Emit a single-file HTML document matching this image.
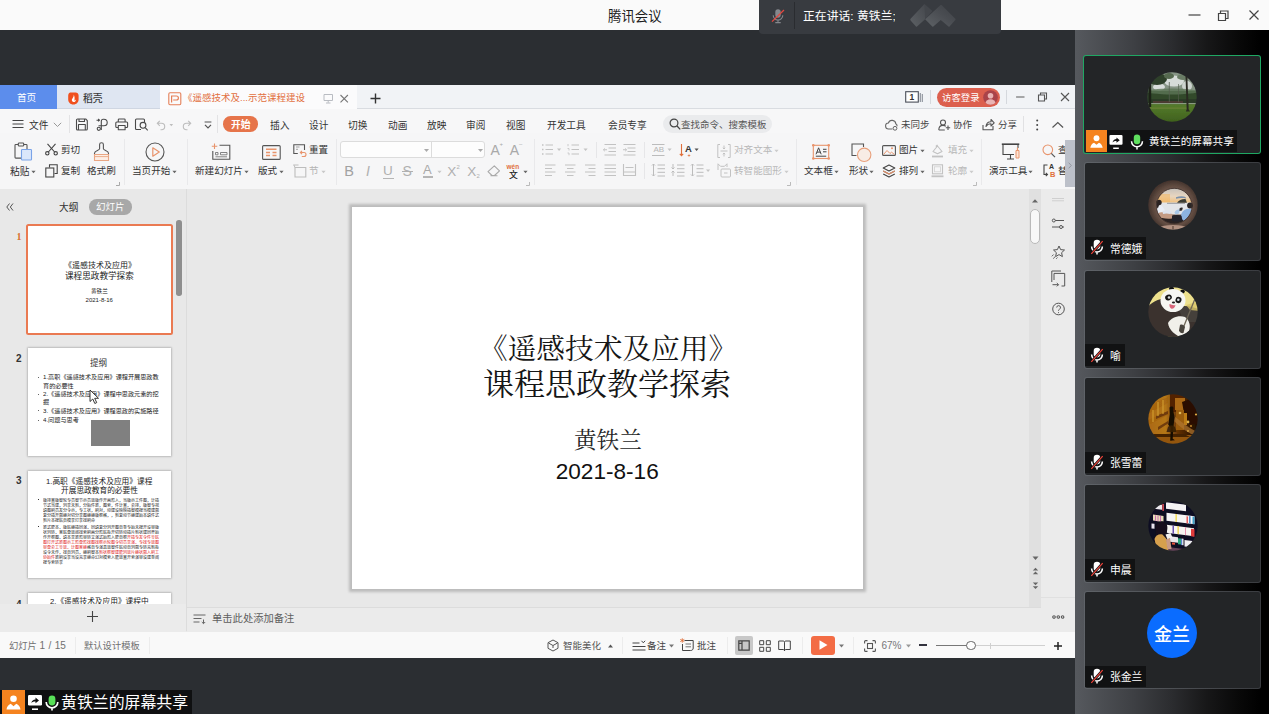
<!DOCTYPE html>
<html lang="zh">
<head>
<meta charset="utf-8">
<title>腾讯会议</title>
<style>
html,body{margin:0;padding:0;}
body{width:1269px;height:714px;overflow:hidden;position:relative;background:#2b2e32;font-family:"Liberation Sans",sans-serif;}
.a{position:absolute;}
.cj{position:absolute;display:block;overflow:hidden;}
.cj svg{position:absolute;left:0;top:0;display:block;overflow:visible;}
.cj svg text{font-family:"Liberation Sans","Noto Sans CJK SC",sans-serif;}
.cj svg text.sf{font-family:"Liberation Serif","Noto Serif CJK SC",serif;}
svg.ic{position:absolute;overflow:visible;}
.lat{position:absolute;white-space:nowrap;line-height:1;}
.sep{position:absolute;width:1px;background:#dcdcdc;}
.tile{position:absolute;left:1084px;width:176.500px;height:98.500px;background:linear-gradient(to right,#5f6368,#3a3c40);border-radius:3px;}
.tile::after{content:"";position:absolute;left:1px;top:1px;right:1px;bottom:1px;background:#232527;border-radius:2px;}
.lab{position:absolute;background:#111213;}
</style>
</head>
<body>

<!-- ===== Tencent Meeting title bar ===== -->
<div class="a" id="titlebar" style="left:0;top:0;width:1269px;height:30px;background:#fafafa;"></div>
<div class="a" id="speaking" style="left:759px;top:0;width:242px;height:33.5px;background:#383b40;border-radius:0 0 4px 4px;"></div>
<div class="a" style="left:794px;top:2px;width:1px;height:27px;background:#2a2c30;"></div>

<!-- ===== right participant panel ===== -->
<div class="a" id="rightpanel" style="left:1075px;top:30px;width:194px;height:684px;background:linear-gradient(to right,#56595e 0,#3e4044 30%,#2b2c2f 50%,#171718 68%,#080808 85%,#000 96%);"></div>

<!-- ===== shared WPS window ===== -->
<div class="a" id="wps" style="left:0;top:85px;width:1075px;height:573px;background:#e8e8e8;overflow:hidden;">
  <div class="a" id="tabrow" style="left:0;top:0;width:1075px;height:23px;background:#f1f3f6;border-bottom:1px solid #d9dce1;"></div>
  <div class="a" id="menurow" style="left:0;top:24px;width:1075px;height:24px;background:#f7f7f8;"></div>
  <div class="a" id="ribbon" style="left:0;top:48px;width:1075px;height:56px;background:#f6f6f7;"></div>
  <div class="a" id="statusbar" style="left:0;top:546.5px;width:1075px;height:27px;background:#f9f9f9;"></div>
</div>

<!-- title bar content -->
<span class="cj" style="left:607.7px;top:8.9px;width:54.6px;height:16.08px"><svg width="54.6" height="16.08"><text x="0" y="11.79" font-size="13.4" fill="#1d1d1d">腾讯会议</text></svg></span>
<svg class="ic" style="left:769px;top:7px" width="18" height="18" viewBox="0 0 18 18">
  <rect x="6.3" y="2.2" width="5.4" height="8.6" rx="2.7" fill="#85888d"/>
  <path d="M4.2 8.3a4.8 4.8 0 0 0 9.6 0M9 13.1v2.2M6.3 15.6h5.4" fill="none" stroke="#85888d" stroke-width="1.1"/>
  <path d="M3 14.6L15 3" stroke="#e5483f" stroke-width="1.3"/>
</svg>
<span class="cj" style="left:802.5px;top:10.1px;width:92.8px;height:14.16px"><svg width="92.8" height="14.16"><text x="0" y="10.38" font-size="11.8" fill="#ffffff" textLength="92.8" lengthAdjust="spacing">正在讲话: 黄铁兰;</text></svg></span>
<svg class="ic" style="left:905px;top:0px" width="56" height="32" viewBox="905 0 56 32">
  <defs>
    <linearGradient id="dg1" x1="0" y1="1" x2="1" y2="0"><stop offset="0" stop-color="#5d6165"/><stop offset="1" stop-color="#45484d"/></linearGradient>
    <linearGradient id="dg2" x1="0" y1="1" x2="1" y2="0"><stop offset="0" stop-color="#5f6367"/><stop offset=".55" stop-color="#4a4d52"/><stop offset="1" stop-color="#3d4045"/></linearGradient>
  </defs>
  <path d="M910.600 18.800L924 4.500q.5-.5 1 0L925.100 19.300 917 26.600q-.5.400-1 0L910.600 20.400q-.7-.8 0-1.600z" fill="url(#dg1)"/>
  <path d="M924.500 4.100L932.500 11 925.100 19.300z" fill="#43464b"/>
  <path d="M925.100 19.300L940.600 5.100q.5-.4 1 0L955.300 18.800q.6.600 0 1.200L949.500 26.600q-.5.400-1 0L940.800 20.100 933.300 26.600q-.5.400-1 0z" fill="url(#dg2)"/>
</svg>
<!-- window controls -->
<svg class="ic" style="left:1186px;top:6px" width="80" height="18" viewBox="0 0 80 18">
  <path d="M2.5 9h12" stroke="#444" stroke-width="1.2" fill="none"/>
  <path d="M32.5 7.5h7v7h-7zM34.5 7.5v-2.5h7.5v7.5h-2.5" stroke="#444" stroke-width="1.2" fill="none"/>
  <path d="M63.5 4.5l9 9M72.5 4.5l-9 9" stroke="#444" stroke-width="1.2" fill="none"/>
</svg>

<!-- WPS tab row -->
<div class="a" style="left:0;top:85px;width:56.5px;height:23.5px;background:#5c8dec;"></div>
<span class="cj" style="left:17.4px;top:92.8px;width:20.2px;height:11.52px"><svg width="20.2" height="11.52"><text x="0" y="8.45" font-size="9.6" fill="#ffffff">首页</text></svg></span>
<div class="a" style="left:56.5px;top:85px;width:103.5px;height:23px;background:#dfe6f2;border-bottom:1px solid #cfd6e2;box-sizing:border-box;height:23.5px"></div>
<svg class="ic" style="left:67px;top:91.5px" width="12" height="13" viewBox="0 0 12 13">
  <path d="M3.2.4h5.4c1.6 0 3 1.3 3 3v4.2c0 2.800-2.200 5-5 5h-.4c-2.800 0-5-2.200-5-5V3.400c0-1.700 1.300-3 2-3z" fill="#f0501e"/>
  <path d="M6.600 2.600c.4 1.500-.2 2.600-1 3.600-.7.900-1 1.800-.5 2.800.4.800 1.300 1.200 2.200.9 1.100-.3 1.700-1.400 1.500-2.500-.5.700-.9 1-1.500 1.100.6-1.400.5-3.800-.7-5.900z" fill="#fff"/>
</svg>
<span class="cj" style="left:82.6px;top:92.7px;width:20.6px;height:11.76px"><svg width="20.6" height="11.76"><text x="0" y="8.62" font-size="9.8" font-weight="500" fill="#3a3a3a">稻壳</text></svg></span>
<div class="a" style="left:160px;top:85px;width:196.5px;height:24px;background:#fbfbfc;"></div>
<svg class="ic" style="left:167.500px;top:91.5px" width="14" height="14" viewBox="0 0 14 14">
  <rect x=".8" y=".8" width="12" height="12" rx="1.2" fill="none" stroke="#e58058" stroke-width="1.100"/>
  <path d="M3.600 10.400V4h4.800a2 2 0 0 1 0 4H5.200" fill="none" stroke="#e58058" stroke-width="1.200"/>
</svg>
<span class="cj" style="left:183.2px;top:92.85px;width:122.92px;height:11.4px"><svg width="122.92" height="11.4"><text x="0" y="8.36" font-size="9.5" fill="#e2703f">《遥感技术及...示范课程建设</text></svg></span>
<svg class="ic" style="left:322.500px;top:92.5px" width="30" height="12" viewBox="0 0 30 12">
  <path d="M1 1.500h8.500v6H1zM5.200 7.500v2.200M3 10h4.500" fill="none" stroke="#b9bcc2" stroke-width="1"/>
  <path d="M17.500 2l7.400 7.400M24.900 2l-7.400 7.400" fill="none" stroke="#777" stroke-width="1.100"/>
</svg>
<svg class="ic" style="left:369.500px;top:93px" width="11" height="11" viewBox="0 0 11 11"><path d="M5.500 0.500v10M.5 5.500h10" stroke="#333" stroke-width="1.400" fill="none"/></svg>
<!-- right side of tab row -->
<svg class="ic" style="left:905px;top:91px" width="19" height="12" viewBox="0 0 19 12">
  <rect x=".7" y=".7" width="12.600" height="10.400" fill="#fff" stroke="#4a4f5a" stroke-width="1.100"/>
  <path d="M15.300 2v9M17.300 3v8" stroke="#8a8f99" stroke-width="1.100"/>
</svg>
<div class="lat" style="left:909.5px;top:92.8px;font-size:8.5px;font-weight:bold;color:#333;">1</div>
<div class="sep" style="left:929.5px;top:90px;height:14px;background:#d5d8dd"></div>
<div class="a" style="left:936.5px;top:87.5px;width:63px;height:19px;border-radius:9.5px;background:#dc5f4e;"></div>
<span class="cj" style="left:942px;top:92.6px;width:38.6px;height:11.28px"><svg width="38.6" height="11.28"><text x="0" y="8.27" font-size="9.4" fill="#ffffff">访客登录</text></svg></span>
<svg class="ic" style="left:982.800px;top:89.5px" width="15" height="15" viewBox="0 0 15 15">
  <defs><clipPath id="cpu"><circle cx="7.500" cy="7.500" r="7.300"/></clipPath></defs>
  <circle cx="7.500" cy="7.500" r="7.300" fill="#a9434a"/>
  <g clip-path="url(#cpu)" fill="#e9b4b4"><circle cx="7.500" cy="5.800" r="2.800"/><ellipse cx="7.500" cy="13.600" rx="5.200" ry="4.400"/></g>
</svg>
<div class="sep" style="left:1006px;top:90px;height:14px;background:#d5d8dd"></div>
<svg class="ic" style="left:1014px;top:91px" width="58" height="12" viewBox="0 0 58 12">
  <path d="M2 6h8.500" stroke="#666" stroke-width="1.100" fill="none"/>
  <path d="M24.500 4h6v6h-6zM26.500 4V2h6v6h-2" stroke="#555" stroke-width="1.100" fill="none"/>
  <path d="M47 2l8 8M55 2l-8 8" stroke="#555" stroke-width="1.100" fill="none"/>
</svg>

<!-- WPS menu row -->
<svg class="ic" style="left:12px;top:119px" width="12" height="10" viewBox="0 0 12 10"><path d="M.5 1.500h11M.5 5h11M.5 8.500h11" stroke="#444" stroke-width="1.100" fill="none"/></svg>
<span class="cj" style="left:28.5px;top:119.55px;width:20.4px;height:11.64px"><svg width="20.4" height="11.64"><text x="0" y="8.54" font-size="9.7" fill="#333333">文件</text></svg></span>
<svg class="ic" style="left:52.500px;top:122px" width="9" height="6" viewBox="0 0 9 6"><path d="M.8.8l3.700 3.700L8.200.8" stroke="#999" stroke-width="1" fill="none"/></svg>
<div class="sep" style="left:68.500px;top:115px;height:18px;background:#e3e3e5"></div>
<!-- quick access icons -->
<svg class="ic" style="left:75px;top:117.500px" width="120" height="14" viewBox="0 0 120 14">
  <g fill="none" stroke="#4a4a4a" stroke-width="1.100" stroke-linejoin="round">
    <path d="M2.500 1h8.200l1.600 1.600v8.400a1 1 0 0 1-1 1H2.500a1 1 0 0 1-1-1V2a1 1 0 0 1 1-1zM3.500 11.800V6.500h6.800v5.300M4 1.200v2.300h5.500V1.200"/>
    <path d="M26.300 12V3.200a2 2 0 0 1 2-2h.6a3.300 3.300 0 0 1 0 6.600h-5.400M21.500 2.200h2.800M23.200 1l1.300 1.200-1.300 1.200"/><circle cx="23.800" cy="10.800" r="1.600"/>
    <path d="M43.300 4V1.800a.8.800 0 0 1 .8-.8h5.200a.8.800 0 0 1 .8.800V4M43.300 9.500h-1.500a1 1 0 0 1-1-1V5a1 1 0 0 1 1-1h9.800a1 1 0 0 1 1 1v3.500a1 1 0 0 1-1 1h-1.500M43.300 7.500h6.800v4.300h-6.800z"/>
    <path d="M66 11.500h-4.500a1 1 0 0 1-1-1V2a1 1 0 0 1 1-1h7a1 1 0 0 1 1 1v2"/><circle cx="68" cy="7.300" r="2.900"/><path d="M70.200 9.600l2.500 2.700"/>
  </g>
  <g fill="none" stroke="#bdbdbd" stroke-width="1.100">
    <path d="M82.500 5.300h4a3.200 3.200 0 0 1 0 6.400h-1M84.800 2.800l-2.500 2.500 2.500 2.500"/>
    <path d="M115.500 5.300h-4a3.200 3.200 0 0 0 0 6.400h1M113.200 2.800l2.500 2.500-2.500 2.500"/>
  </g>
  <path d="M94.500 6l1.800 2.200L98.100 6z" fill="#bdbdbd"/>
</svg>
<svg class="ic" style="left:203.500px;top:120.500px" width="8" height="9" viewBox="0 0 8 9"><path d="M.6 1h6.800M1 3.800l3 3 3-3" stroke="#555" stroke-width="1.200" fill="none"/></svg>
<div class="sep" style="left:217px;top:115px;height:18px;background:#e3e3e5"></div>
<div class="a" style="left:223px;top:116.300px;width:34.500px;height:15.400px;border-radius:7.700px;background:#e6744a;"></div>
<span class="cj" style="left:230.5px;top:119.3px;width:20.6px;height:11.76px"><svg width="20.6" height="11.76"><text x="0" y="8.62" font-size="9.8" font-weight="bold" fill="#ffffff">开始</text></svg></span>
<span class="cj" style="left:269.8px;top:119.55px;width:20.4px;height:11.64px"><svg width="20.4" height="11.64"><text x="0" y="8.54" font-size="9.7" fill="#333333">插入</text></svg></span>
<span class="cj" style="left:309.1px;top:119.55px;width:20.4px;height:11.64px"><svg width="20.4" height="11.64"><text x="0" y="8.54" font-size="9.7" fill="#333333">设计</text></svg></span>
<span class="cj" style="left:348.3px;top:119.55px;width:20.4px;height:11.64px"><svg width="20.4" height="11.64"><text x="0" y="8.54" font-size="9.7" fill="#333333">切换</text></svg></span>
<span class="cj" style="left:387.7px;top:119.55px;width:20.4px;height:11.64px"><svg width="20.4" height="11.64"><text x="0" y="8.54" font-size="9.7" fill="#333333">动画</text></svg></span>
<span class="cj" style="left:427.1px;top:119.55px;width:20.4px;height:11.64px"><svg width="20.4" height="11.64"><text x="0" y="8.54" font-size="9.7" fill="#333333">放映</text></svg></span>
<span class="cj" style="left:466.4px;top:119.55px;width:20.4px;height:11.64px"><svg width="20.4" height="11.64"><text x="0" y="8.54" font-size="9.7" fill="#333333">审阅</text></svg></span>
<span class="cj" style="left:506px;top:119.55px;width:20.4px;height:11.64px"><svg width="20.4" height="11.64"><text x="0" y="8.54" font-size="9.7" fill="#333333">视图</text></svg></span>
<span class="cj" style="left:547.3px;top:119.55px;width:39.8px;height:11.64px"><svg width="39.8" height="11.64"><text x="0" y="8.54" font-size="9.7" fill="#333333">开发工具</text></svg></span>
<span class="cj" style="left:608.2px;top:119.55px;width:39.8px;height:11.64px"><svg width="39.8" height="11.64"><text x="0" y="8.54" font-size="9.7" fill="#333333">会员专享</text></svg></span>
<div class="a" style="left:662.500px;top:114.600px;width:109px;height:18.500px;border-radius:9.250px;background:#eaebed;"></div>
<svg class="ic" style="left:668.500px;top:118px" width="12" height="12" viewBox="0 0 12 12"><circle cx="5" cy="5" r="3.900" fill="none" stroke="#444" stroke-width="1.200"/><path d="M7.800 7.800l3.400 3.600" stroke="#444" stroke-width="1.300"/></svg>
<span class="cj" style="left:681.3px;top:119.65px;width:86.5px;height:11.4px"><svg width="86.5" height="11.4"><text x="0" y="8.36" font-size="9.5" fill="#555555">查找命令、搜索模板</text></svg></span>
<!-- right of menu row -->
<svg class="ic" style="left:885px;top:118.500px" width="13" height="12" viewBox="0 0 13 12"><path d="M7.500 10H3.800a3 3 0 0 1-.4-6 3.800 3.800 0 0 1 7.400.8 2.600 2.600 0 0 1 1.300 2.400" fill="none" stroke="#666" stroke-width="1.100"/><circle cx="10" cy="9.300" r="1.900" fill="none" stroke="#666" stroke-width="1"/></svg>
<span class="cj" style="left:900.5px;top:119.65px;width:29.5px;height:11.4px"><svg width="29.5" height="11.4"><text x="0" y="8.36" font-size="9.5" fill="#444444">未同步</text></svg></span>
<svg class="ic" style="left:937.500px;top:118.500px" width="13" height="12" viewBox="0 0 13 12"><circle cx="5" cy="3.500" r="2.500" fill="none" stroke="#555" stroke-width="1.100"/><path d="M.8 11c0-3 1.800-4.600 4.200-4.600 1.200 0 2 .3 2.800.9M.8 11h6M10 6.500v4.400M7.800 8.700h4.400" fill="none" stroke="#555" stroke-width="1.100"/></svg>
<span class="cj" style="left:953px;top:119.65px;width:20px;height:11.4px"><svg width="20" height="11.4"><text x="0" y="8.36" font-size="9.5" fill="#444444">协作</text></svg></span>
<svg class="ic" style="left:982px;top:118px" width="13" height="13" viewBox="0 0 13 13"><path d="M1 7v4.800h10V8M4 8.500c.3-3 2.200-4.800 5-4.800V1.500l3.200 3.300L9 8V5.800C7 5.800 5.200 6.500 4 8.500z" fill="none" stroke="#555" stroke-width="1.100" stroke-linejoin="round"/></svg>
<span class="cj" style="left:997.5px;top:119.65px;width:20px;height:11.4px"><svg width="20" height="11.4"><text x="0" y="8.36" font-size="9.5" fill="#444444">分享</text></svg></span>
<div class="sep" style="left:1023px;top:116px;height:16px;background:#e1e1e3"></div>
<svg class="ic" style="left:1035px;top:118.500px" width="30" height="12" viewBox="0 0 30 12"><g fill="#444"><circle cx="2.200" cy="1.500" r="1"/><circle cx="2.200" cy="6" r="1"/><circle cx="2.200" cy="10.500" r="1"/></g><path d="M17.500 8.500l5.300-5 5.300 5" fill="none" stroke="#555" stroke-width="1.200"/></svg>

<!-- WPS ribbon -->
<!-- paste -->
<svg class="ic" style="left:14px;top:142px" width="19" height="19" viewBox="0 0 19 19">
  <path d="M4.500 2.500H1.800a.8.800 0 0 0-.8.800v12a.8.800 0 0 0 .8.800H7M9.500 2.500h2.700a.8.800 0 0 1 .8.800V7" fill="none" stroke="#555" stroke-width="1.100"/>
  <rect x="4.300" y="1" width="5.400" height="3" rx=".8" fill="#f6f6f7" stroke="#555" stroke-width="1.100"/>
  <rect x="7.500" y="7.500" width="10" height="10.500" rx=".8" fill="#dbe7fb" stroke="#7aa3e8" stroke-width="1.100"/>
</svg>
<span class="cj" style="left:10.2px;top:166.35px;width:20.4px;height:11.64px"><svg width="20.4" height="11.64"><text x="0" y="8.54" font-size="9.7" fill="#333333">粘贴</text></svg></span>
<svg class="ic" style="left:31px;top:169.500px" width="5" height="4" viewBox="0 0 5 4"><path d="M.4 .8h4.200L2.500 3.300z" fill="#666"/></svg>
<!-- cut / copy -->
<svg class="ic" style="left:44.500px;top:143px" width="13" height="13" viewBox="0 0 13 13"><g fill="none" stroke="#444" stroke-width="1.100"><circle cx="2.300" cy="10.300" r="1.700"/><circle cx="10.700" cy="10.300" r="1.700"/><path d="M3.400 9L10.500.8M9.600 9L2.500.8"/></g></svg>
<span class="cj" style="left:60.5px;top:145.4px;width:20.2px;height:11.52px"><svg width="20.2" height="11.52"><text x="0" y="8.45" font-size="9.6" fill="#333333">剪切</text></svg></span>
<svg class="ic" style="left:44.500px;top:164px" width="13" height="14" viewBox="0 0 13 14"><g fill="none" stroke="#444" stroke-width="1.100"><path d="M4.500 3.500V.8h7.700v8.700H9.500"/><rect x=".8" y="4" width="8" height="9"/></g></svg>
<span class="cj" style="left:60.5px;top:166.4px;width:20.2px;height:11.52px"><svg width="20.2" height="11.52"><text x="0" y="8.45" font-size="9.6" fill="#333333">复制</text></svg></span>
<!-- format painter -->
<svg class="ic" style="left:93px;top:141.500px" width="17" height="20" viewBox="0 0 17 20">
  <path d="M6.600 2.600a1.900 1.900 0 0 1 3.800 0V6.800c0 1.700 5.100 1.800 5.100 4.400v1.300h-14V11.200c0-2.600 5.100-2.700 5.100-4.400z" fill="none" stroke="#555" stroke-width="1.100" stroke-linejoin="round"/>
  <path d="M1.500 12.500h14v6h-14z" fill="#fdeee5" stroke="#e9a683" stroke-width="1.100"/>
  <path d="M1.500 14.600h14" stroke="#e9a683" stroke-width=".9"/>
</svg>
<span class="cj" style="left:87.4px;top:166.4px;width:29.8px;height:11.52px"><svg width="29.8" height="11.52"><text x="0" y="8.45" font-size="9.6" fill="#333333">格式刷</text></svg></span>
<svg class="ic" style="left:116px;top:182px" width="4" height="4" viewBox="0 0 4 4"><path d="M3.500 0v3.500H0" fill="none" stroke="#aaa" stroke-width="1"/></svg>
<div class="sep" style="left:124px;top:139px;height:46px;background:#e9e9eb"></div>
<!-- play from current -->
<svg class="ic" style="left:144.500px;top:142px" width="20" height="20" viewBox="0 0 20 20"><circle cx="10" cy="10" r="9" fill="none" stroke="#555" stroke-width="1.100"/><path d="M7.800 5.800v8.400L14.300 10z" fill="none" stroke="#e8946c" stroke-width="1.200" stroke-linejoin="round"/></svg>
<span class="cj" style="left:132.4px;top:166.4px;width:39.4px;height:11.52px"><svg width="39.4" height="11.52"><text x="0" y="8.45" font-size="9.6" fill="#333333">当页开始</text></svg></span>
<svg class="ic" style="left:172.300px;top:169.500px" width="5" height="4" viewBox="0 0 5 4"><path d="M.4 .8h4.200L2.500 3.300z" fill="#666"/></svg>
<div class="sep" style="left:186.500px;top:139px;height:46px;background:#e9e9eb"></div>
<!-- new slide -->
<svg class="ic" style="left:211px;top:142.500px" width="20" height="18" viewBox="0 0 20 18">
  <path d="M3.500.5v5.500M.8 3.200h5.500" stroke="#e8946c" stroke-width="1.100" fill="none"/>
  <path d="M8.500 2.200h10.300v14H1.800V8" fill="none" stroke="#555" stroke-width="1.100"/>
  <path d="M4.500 9.500h2.500v2.300H4.500zM9.500 9.500h6.500v2.300H9.500zM4.500 13.800h11.500" fill="none" stroke="#777" stroke-width=".9"/>
</svg>
<span class="cj" style="left:194.7px;top:166.4px;width:49px;height:11.52px"><svg width="49" height="11.52"><text x="0" y="8.45" font-size="9.6" fill="#333333">新建幻灯片</text></svg></span>
<svg class="ic" style="left:244px;top:169.500px" width="5" height="4" viewBox="0 0 5 4"><path d="M.4 .8h4.200L2.500 3.300z" fill="#666"/></svg>
<!-- layout -->
<svg class="ic" style="left:261.500px;top:144.500px" width="19" height="15" viewBox="0 0 19 15">
  <rect x=".6" y=".6" width="17.600" height="13.800" rx="1" fill="none" stroke="#555" stroke-width="1.100"/>
  <path d="M4 4.300h10.500M4 7.600h4M10.500 7.600h4M4 10.500h4M10.500 10.500h4" stroke="#e8946c" stroke-width="1.500" fill="none"/>
</svg>
<span class="cj" style="left:258.2px;top:166.4px;width:20.2px;height:11.52px"><svg width="20.2" height="11.52"><text x="0" y="8.45" font-size="9.6" fill="#333333">版式</text></svg></span>
<svg class="ic" style="left:278.800px;top:169.500px" width="5" height="4" viewBox="0 0 5 4"><path d="M.4 .8h4.200L2.500 3.300z" fill="#666"/></svg>
<!-- reset / section -->
<svg class="ic" style="left:292.500px;top:143.500px" width="14" height="13" viewBox="0 0 14 13">
  <path d="M11.500 6V.8H.8v8.700h4" fill="none" stroke="#555" stroke-width="1.100"/>
  <path d="M3 3h3.500M3 5.300h2" stroke="#999" stroke-width=".9"/>
  <path d="M7.500 8.500h3.500a2 2 0 0 1 0 4H8.800M9 6.800L7.300 8.500 9 10.200" fill="none" stroke="#e8946c" stroke-width="1.100"/>
</svg>
<span class="cj" style="left:308.5px;top:145.4px;width:20.2px;height:11.52px"><svg width="20.2" height="11.52"><text x="0" y="8.45" font-size="9.6" fill="#333333">重置</text></svg></span>
<svg class="ic" style="left:292.500px;top:163.500px" width="14" height="14" viewBox="0 0 14 14">
  <path d="M.5 1h5M2 3.500h10.800v9.500H2z" fill="none" stroke="#bdbdbd" stroke-width="1.100"/><path d="M2 3.500L.8.800" stroke="#bdbdbd" stroke-width="1"/>
</svg>
<span class="cj" style="left:309px;top:166.4px;width:10.6px;height:11.52px"><svg width="10.6" height="11.52"><text x="0" y="8.45" font-size="9.6" fill="#b3b3b3">节</text></svg></span>
<svg class="ic" style="left:320.500px;top:169.500px" width="5" height="4" viewBox="0 0 5 4"><path d="M.4 .8h4.200L2.500 3.300z" fill="#c8c8c8"/></svg>
<div class="sep" style="left:335.500px;top:139px;height:46px;background:#e9e9eb"></div>
<!-- font boxes -->
<div class="a" style="left:339.500px;top:140.500px;width:145px;height:17.500px;background:#fdfdfd;border:1px solid #dcdcdc;border-radius:3px;box-sizing:border-box"></div>
<div class="a" style="left:431px;top:141px;width:1px;height:16.500px;background:#dcdcdc"></div>
<svg class="ic" style="left:424px;top:148.500px" width="5" height="3" viewBox="0 0 5 3"><path d="M0 0h5L2.500 3z" fill="#aaa"/></svg>
<svg class="ic" style="left:477.500px;top:148.500px" width="5" height="3" viewBox="0 0 5 3"><path d="M0 0h5L2.500 3z" fill="#aaa"/></svg>
<!-- A+ A- -->
<div class="lat" style="left:490.500px;top:142.500px;font-size:14px;color:#a9a9a9;">A</div>
<div class="lat" style="left:499.500px;top:141px;font-size:6px;color:#a9a9a9;">+</div>
<div class="lat" style="left:509.800px;top:142.500px;font-size:14px;color:#a9a9a9;">A</div>
<div class="lat" style="left:519px;top:140.500px;font-size:6px;color:#a9a9a9;">&#8211;</div>
<!-- B I U S A X2 X2 eraser wen -->
<div class="lat" style="left:344.200px;top:164px;font-size:14.500px;color:#a2a2a2;">B</div>
<div class="lat" style="left:366px;top:164px;font-size:14px;color:#b0b0b0;font-style:italic;">I</div>
<div class="lat" style="left:383px;top:164px;font-size:13.500px;color:#b0b0b0;">U</div>
<div class="a" style="left:382.500px;top:177.500px;width:11px;height:1px;background:#b5b5b5"></div>
<div class="lat" style="left:402.500px;top:164px;font-size:14px;color:#b0b0b0;">S</div>
<div class="a" style="left:401.500px;top:170.500px;width:11.500px;height:1px;background:#b0b0b0"></div>
<div class="lat" style="left:423px;top:163px;font-size:13px;color:#a9a9a9;">A</div>
<div class="a" style="left:422.500px;top:175.500px;width:10px;height:2px;background:#b5b5b5"></div>
<svg class="ic" style="left:437px;top:169.500px" width="5" height="4" viewBox="0 0 5 4"><path d="M.4 .8h4.200L2.500 3.300z" fill="#c8c8c8"/></svg>
<div class="lat" style="left:447.300px;top:164.500px;font-size:13.500px;color:#b0b0b0;">X</div>
<div class="lat" style="left:456.500px;top:164px;font-size:6px;color:#b0b0b0;">2</div>
<div class="lat" style="left:467.300px;top:164.500px;font-size:13.500px;color:#b0b0b0;">X</div>
<div class="lat" style="left:476.500px;top:172.500px;font-size:6px;color:#b0b0b0;">2</div>
<svg class="ic" style="left:487px;top:165px" width="14" height="12" viewBox="0 0 14 12"><path d="M5 10.500L1 6.700 7.300.8l5.200 5-5 4.700zM3.500 10.800h7" fill="none" stroke="#a9a9a9" stroke-width="1.100" stroke-linejoin="round"/></svg>
<div class="lat" style="left:506.500px;top:164px;font-size:6.500px;color:#e0703c;font-weight:bold;">w&#233;n</div>
<span class="cj" style="left:508.6px;top:169.6px;width:9.8px;height:10.56px"><svg width="9.8" height="10.56"><text x="0" y="7.74" font-size="8.8" font-weight="500" fill="#222222">文</text></svg></span>
<svg class="ic" style="left:522.500px;top:169.500px" width="5" height="4" viewBox="0 0 5 4"><path d="M.4 .8h4.200L2.500 3.300z" fill="#666"/></svg>
<svg class="ic" style="left:526px;top:182px" width="4" height="4" viewBox="0 0 4 4"><path d="M3.500 0v3.500H0" fill="none" stroke="#bbb" stroke-width="1"/></svg>
<div class="sep" style="left:534px;top:139px;height:46px;background:#e9e9eb"></div>
<!-- paragraph group -->
<svg class="ic" style="left:541px;top:143px" width="100" height="36" viewBox="0 0 100 36"><g fill="none" stroke="#c2c2c2" stroke-width="1.100">
  <path d="M4.500 2h7.500M4.500 6.500h7.500M4.500 11h7.500"/><path d="M1 2h1.500M1 6.500h1.500M1 11h1.500" stroke-width="1.300"/>
  <path d="M30.500 2h7.500M30.500 6.500h7.500M30.500 11h7.500"/><path d="M27 1v2.200M26.500 5.500h1.500v2M26.500 10h1.500v2.200" stroke-width=".8"/>
  <path d="M63.500 1.500h11.500M67.500 5h7.500M67.500 8.500h7.500M63.500 12h11.500M66 6.800h-3.500"/><path d="M64 5.300l-1.700 1.500 1.700 1.500" stroke-width=".8"/>
  <path d="M82.500 1.500h12M86.500 5h8M86.500 8.500h8M82.500 12h12M82 6.800h3.500"/><path d="M84 5.300l1.700 1.500-1.700 1.500" stroke-width=".8"/>
  <path d="M4 22h10.500M4 25.500h7M4 29h10.500M4 32.500h7"/>
  <path d="M24 22h10.500M26 25.500h6.500M24 29h10.500M26 32.500h6.500"/>
  <path d="M44 22h10.500M47.500 25.500h7M44 29h10.500M47.500 32.500h7"/>
  <path d="M63.500 22h11.500M63.500 25.500h11.500M63.500 29h11.500M63.500 32.500h11.500"/>
  <path d="M82.500 21v12M94.500 21v12M82.500 29h12M82.500 32.500h12M84.500 24.500h8"/>
</g>
<path d="M16 5.500h4.200L18.100 8z" fill="#c4c4c4"/><path d="M42.500 5.500h4.200L44.600 8z" fill="#c4c4c4"/>
</svg>
<div class="sep" style="left:596px;top:142px;height:16px;background:#e6e6e8"></div>
<div class="sep" style="left:644px;top:142px;height:16px;background:#e6e6e8"></div>
<div class="sep" style="left:644px;top:163px;height:16px;background:#e6e6e8"></div>
<!-- AB / text direction -->
<svg class="ic" style="left:651px;top:143px" width="60" height="36" viewBox="0 0 60 36"><g fill="none" stroke="#bcbcbc" stroke-width="1">
  <path d="M1 1.500h12.500M1 12.500h12.500"/>
  <path d="M3 22.500h0M2.500 21v12M1 22.500l1.500-1.500 1.500 1.500M1 31.500l1.500 1.500 1.500-1.500M6.500 22h7.500M6.500 25.700h7.500M6.500 29.300h7.500M6.500 33h7.500"/>
  <path d="M22 21v5M20.500 24.500l1.500 1.500 1.500-1.500M22 33v-5M20.500 29.500l1.500-1.500 1.500 1.500M26 22h7.500M26 25.700h7.500M26 29.300h7.500M26 33h7.500"/>
  <path d="M41.500 21v12M40 22.500l1.500-1.500 1.500 1.500M40 31.500l1.500 1.500 1.500-1.500M45.500 22h7M45.500 25.700h7M45.500 29.300h7M45.500 33h7"/>
</g>
<path d="M16.500 5.500h4.200L18.600 8z" fill="#c4c4c4"/><path d="M55 26.500h4.200L57.100 29z" fill="#c4c4c4"/>
<path d="M30.500 1v11.500M28.800 10.800l1.700 1.900 1.700-1.900" fill="none" stroke="#e0703c" stroke-width="1.100"/>
<path d="M38 11.500v1.500M36.800 12l1.200 1.300 1.200-1.300" fill="none" stroke="#e0703c" stroke-width=".9"/>
<path d="M43.500 5.500h4.200L45.600 8z" fill="#555"/>
</svg>
<div class="lat" style="left:653.500px;top:146.300px;font-size:8px;color:#b5b5b5;">AB</div>
<div class="lat" style="left:685px;top:143.500px;font-size:9.500px;color:#333;font-weight:bold;">A</div>
<!-- align text / smart art -->
<svg class="ic" style="left:717px;top:143.500px" width="14" height="14" viewBox="0 0 14 14"><g fill="none" stroke="#c2c2c2" stroke-width="1"><path d="M3 .5H.8v13H3M11 .5h2.200v13H11M3.500 7h7M7 1.500v3.500M5.800 3.800L7 5l1.200-1.200M7 12.500V9M5.800 10.200L7 9l1.200 1.200"/></g></svg>
<span class="cj" style="left:733.6px;top:145.4px;width:39.4px;height:11.52px"><svg width="39.4" height="11.52"><text x="0" y="8.45" font-size="9.6" fill="#b9b9b9">对齐文本</text></svg></span>
<svg class="ic" style="left:774px;top:148.500px" width="5" height="4" viewBox="0 0 5 4"><path d="M.4 .8h4.200L2.500 3.300z" fill="#cccccc"/></svg>
<svg class="ic" style="left:717px;top:163px" width="15" height="15" viewBox="0 0 15 15"><g fill="none" stroke="#c2c2c2" stroke-width="1"><path d="M1 7V.8l2.500 2.500h4L10 .8V4"/><rect x="4" y="6" width="9.500" height="8" rx="1"/><path d="M7 10h3.500"/></g></svg>
<span class="cj" style="left:733.6px;top:166.4px;width:49px;height:11.52px"><svg width="49" height="11.52"><text x="0" y="8.45" font-size="9.6" fill="#b9b9b9">转智能图形</text></svg></span>
<svg class="ic" style="left:783.500px;top:169.500px" width="5" height="4" viewBox="0 0 5 4"><path d="M.4 .8h4.200L2.500 3.300z" fill="#cccccc"/></svg>
<svg class="ic" style="left:787px;top:182px" width="4" height="4" viewBox="0 0 4 4"><path d="M3.500 0v3.500H0" fill="none" stroke="#bbb" stroke-width="1"/></svg>
<div class="sep" style="left:795.500px;top:139px;height:46px;background:#e9e9eb"></div>
<!-- text box -->
<svg class="ic" style="left:811px;top:143px" width="20" height="18" viewBox="0 0 20 18">
  <rect x="2.300" y="2.300" width="15.400" height="13.200" fill="none" stroke="#e8946c" stroke-width="1.100"/>
  <g fill="#e8946c"><circle cx="2.300" cy="2.300" r="1.300"/><circle cx="17.700" cy="2.300" r="1.300"/><circle cx="2.300" cy="15.500" r="1.300"/><circle cx="17.700" cy="15.500" r="1.300"/></g>
  <path d="M5 11.300L7.600 4.800l2.600 6.500M5.900 9.100h3.400M4.800 13.200h10.400M12 6.300h3.500M12 8.800h3.500" fill="none" stroke="#444" stroke-width="1"/>
</svg>
<span class="cj" style="left:803.7px;top:166.4px;width:29.8px;height:11.52px"><svg width="29.8" height="11.52"><text x="0" y="8.45" font-size="9.6" fill="#333333">文本框</text></svg></span>
<svg class="ic" style="left:834px;top:169.500px" width="5" height="4" viewBox="0 0 5 4"><path d="M.4 .8h4.200L2.500 3.300z" fill="#666"/></svg>
<!-- shapes -->
<svg class="ic" style="left:851px;top:142.500px" width="21" height="20" viewBox="0 0 21 20">
  <path d="M12.500 4V1H1v11.500h4.500" fill="none" stroke="#555" stroke-width="1.100"/>
  <circle cx="13.200" cy="11.800" r="6.700" fill="#f8ece5" stroke="#e8a07c" stroke-width="1.100"/>
</svg>
<span class="cj" style="left:848.5px;top:166.4px;width:20.2px;height:11.52px"><svg width="20.2" height="11.52"><text x="0" y="8.45" font-size="9.6" fill="#333333">形状</text></svg></span>
<svg class="ic" style="left:869px;top:169.500px" width="5" height="4" viewBox="0 0 5 4"><path d="M.4 .8h4.200L2.500 3.300z" fill="#666"/></svg>
<!-- picture / fill / arrange / outline -->
<svg class="ic" style="left:881.500px;top:145px" width="14" height="11" viewBox="0 0 14 11"><rect x=".6" y=".6" width="12.800" height="9.800" rx="1" fill="none" stroke="#555" stroke-width="1.100"/><path d="M1.500 9.500l3.500-4 3 3 1.500-1.300 3 2.300" fill="none" stroke="#e8946c" stroke-width="1"/><circle cx="10" cy="3.300" r="1" fill="#e8946c"/></svg>
<span class="cj" style="left:898.5px;top:145.4px;width:20.2px;height:11.52px"><svg width="20.2" height="11.52"><text x="0" y="8.45" font-size="9.6" fill="#333333">图片</text></svg></span>
<svg class="ic" style="left:919.500px;top:148.500px" width="5" height="4" viewBox="0 0 5 4"><path d="M.4 .8h4.200L2.500 3.300z" fill="#666"/></svg>
<svg class="ic" style="left:931px;top:143.500px" width="13" height="14" viewBox="0 0 13 14"><path d="M2 7.500L6.500 2 11 7.500 6.500 9.800zM4.800 2.500L6.500 .8M1 12.500h11" fill="none" stroke="#c2c2c2" stroke-width="1.100" stroke-linejoin="round"/><path d="M1 12.500h11" stroke="#c2c2c2" stroke-width="1.800"/></svg>
<span class="cj" style="left:947.5px;top:145.4px;width:20.2px;height:11.52px"><svg width="20.2" height="11.52"><text x="0" y="8.45" font-size="9.6" fill="#b9b9b9">填充</text></svg></span>
<svg class="ic" style="left:968.500px;top:148.500px" width="5" height="4" viewBox="0 0 5 4"><path d="M.4 .8h4.200L2.500 3.300z" fill="#cccccc"/></svg>
<svg class="ic" style="left:881.500px;top:164px" width="14" height="14" viewBox="0 0 14 14"><path d="M7 1l5.800 3L7 7 1.200 4z" fill="none" stroke="#444" stroke-width="1.100" stroke-linejoin="round"/><path d="M1.200 7L7 10l5.800-3M1.200 10L7 13l5.800-3" fill="none" stroke="#444" stroke-width="1.100" stroke-linejoin="round"/><path d="M1.200 7L7 10l5.800-3" fill="none" stroke="#e8946c" stroke-width="1.100" stroke-linejoin="round"/></svg>
<span class="cj" style="left:898.5px;top:166.4px;width:20.2px;height:11.52px"><svg width="20.2" height="11.52"><text x="0" y="8.45" font-size="9.6" fill="#333333">排列</text></svg></span>
<svg class="ic" style="left:919.500px;top:169.500px" width="5" height="4" viewBox="0 0 5 4"><path d="M.4 .8h4.200L2.500 3.300z" fill="#666"/></svg>
<svg class="ic" style="left:931px;top:164px" width="13" height="14" viewBox="0 0 13 14"><rect x="1.500" y=".8" width="10" height="9" fill="none" stroke="#c2c2c2" stroke-width="1.100"/><rect x="3.500" y="2.800" width="6" height="5" fill="none" stroke="#d5d5d5" stroke-width=".9"/><path d="M.5 12.300h12" stroke="#c2c2c2" stroke-width="1.800"/></svg>
<span class="cj" style="left:947.5px;top:166.4px;width:20.2px;height:11.52px"><svg width="20.2" height="11.52"><text x="0" y="8.45" font-size="9.6" fill="#b9b9b9">轮廓</text></svg></span>
<svg class="ic" style="left:968.500px;top:169.500px" width="5" height="4" viewBox="0 0 5 4"><path d="M.4 .8h4.200L2.500 3.300z" fill="#cccccc"/></svg>
<svg class="ic" style="left:973px;top:182px" width="4" height="4" viewBox="0 0 4 4"><path d="M3.500 0v3.500H0" fill="none" stroke="#bbb" stroke-width="1"/></svg>
<div class="sep" style="left:980.500px;top:139px;height:46px;background:#e9e9eb"></div>
<!-- presentation tools -->
<svg class="ic" style="left:1001px;top:143px" width="20" height="19" viewBox="0 0 20 19">
  <path d="M.8 1.200h17.500" stroke="#444" stroke-width="1.600"/>
  <path d="M2 2v9.500h11M17 2v3M9.500 11.500v4M6 16h7" fill="none" stroke="#444" stroke-width="1.100"/>
  <path d="M15 7.500h3v7.500h-3z" fill="#fde3d3" stroke="#e8946c" stroke-width="1"/><path d="M16.500 4.500v3" stroke="#e8946c" stroke-width="1.200"/>
</svg>
<span class="cj" style="left:988.6px;top:166.4px;width:39.4px;height:11.52px"><svg width="39.4" height="11.52"><text x="0" y="8.45" font-size="9.6" fill="#333333">演示工具</text></svg></span>
<svg class="ic" style="left:1028px;top:169.500px" width="5" height="4" viewBox="0 0 5 4"><path d="M.4 .8h4.200L2.500 3.300z" fill="#666"/></svg>
<svg class="ic" style="left:1041.500px;top:143.500px" width="14" height="14" viewBox="0 0 14 14"><circle cx="5.800" cy="5.800" r="4.800" fill="none" stroke="#e8946c" stroke-width="1.100"/><path d="M9.300 9.300l3.700 3.900" stroke="#555" stroke-width="1.200"/></svg>
<div class="a" style="left:1057.500px;top:144px;width:7.500px;height:13px;overflow:hidden"><span class="cj" style="left:0px;top:1.4px;width:10.6px;height:11.52px"><svg width="10.6" height="11.52"><text x="0" y="8.45" font-size="9.6" fill="#333333">查</text></svg></span></div>
<svg class="ic" style="left:1042.500px;top:163.500px" width="14" height="15" viewBox="0 0 14 15"><path d="M4.500 1H1v9.500h3M2.800 8.800l1.700 1.700-1.700 1.700" fill="none" stroke="#444" stroke-width="1.100"/></svg>
<div class="lat" style="left:1049px;top:162.500px;font-size:7px;color:#333;font-weight:bold;">A</div>
<div class="lat" style="left:1050px;top:170.500px;font-size:7.500px;color:#e0703c;font-weight:bold;">B</div>
<div class="a" style="left:1057.500px;top:165px;width:7.500px;height:13px;overflow:hidden"><span class="cj" style="left:0px;top:1.4px;width:10.6px;height:11.52px"><svg width="10.6" height="11.52"><text x="0" y="8.45" font-size="9.6" fill="#333333">替</text></svg></span></div>
<!-- ribbon scroll handle -->
<div class="a" style="left:1065px;top:139.500px;width:10px;height:47.500px;background:#bcc0c9;"></div>
<svg class="ic" style="left:1067.500px;top:161.500px" width="4" height="7" viewBox="0 0 4 7"><path d="M.7.700L3.300 3.500.7 6.300" fill="none" stroke="#8d919b" stroke-width=".9"/></svg>

<!-- left slide pane -->
<div class="a" style="left:186px;top:189px;width:1px;height:442px;background:#dcdcdc"></div>
<svg class="ic" style="left:6px;top:203px" width="8" height="8" viewBox="0 0 8 8"><path d="M3.500.5L.8 4l2.700 3.500M7 .5L4.300 4 7 7.500" fill="none" stroke="#555" stroke-width="1"/></svg>
<span class="cj" style="left:59px;top:201.65px;width:20.4px;height:11.64px"><svg width="20.4" height="11.64"><text x="0" y="8.54" font-size="9.7" fill="#333333">大纲</text></svg></span>
<div class="a" style="left:88.500px;top:199px;width:43.500px;height:15.500px;border-radius:7.750px;background:#a8a8a8;"></div>
<span class="cj" style="left:96.05px;top:201.95px;width:29.5px;height:11.4px"><svg width="29.5" height="11.4"><text x="0" y="8.36" font-size="9.5" fill="#ffffff">幻灯片</text></svg></span>
<div class="a" style="left:176px;top:220px;width:5.500px;height:76px;border-radius:2.750px;background:#8e8e8e;"></div>
<!-- thumb 1 -->
<div class="a" style="left:26px;top:223.500px;width:146.500px;height:111px;box-sizing:border-box;border:2px solid #ea7a52;border-radius:2.500px;background:#fff;"></div>
<div class="lat" style="left:16.500px;top:231.500px;font-size:10px;font-weight:bold;color:#d9702f;font-family:'Liberation Serif',serif;">1</div>
<span class="cj" style="left:63.5px;top:261.2px;width:73px;height:9.6px"><svg width="73" height="9.6"><text x="0" y="7.04" font-size="8" fill="#222222">《遥感技术及应用》</text></svg></span>
<span class="cj" style="left:65.1px;top:271.2px;width:69.8px;height:10.32px"><svg width="69.8" height="10.32"><text x="0" y="7.57" font-size="8.6" fill="#222222">课程思政教学探索</text></svg></span>
<span class="cj" style="left:91.1px;top:287.7px;width:17.8px;height:6.72px"><svg width="17.8" height="6.72"><text x="0" y="4.93" font-size="5.6" fill="#222222">黄铁兰</text></svg></span>
<div class="lat" style="left:26px;width:146.500px;text-align:center;top:296.500px;font-size:6px;color:#222;">2021-8-16</div>
<!-- thumb 2 -->
<div class="a" style="left:26.500px;top:346.500px;width:145.500px;height:110.500px;box-sizing:border-box;border:1px solid #c6c6c6;border-radius:1.500px;background:#fff;box-shadow:0 0 2px rgba(0,0,0,.18);"></div>
<div class="lat" style="left:16px;top:353.500px;font-size:10px;font-weight:bold;color:#333;">2</div>
<span class="cj" style="left:90.4px;top:357.7px;width:18.2px;height:10.32px"><svg width="18.2" height="10.32"><text x="0" y="7.57" font-size="8.6" fill="#333333">提纲</text></svg></span>
<div class="a" style="left:37.500px;top:376.500px;width:1.500px;height:1.500px;border-radius:1px;background:#333"></div>
<div class="a" style="left:37.500px;top:393.500px;width:1.500px;height:1.500px;border-radius:1px;background:#333"></div>
<div class="a" style="left:37.500px;top:409.500px;width:1.500px;height:1.500px;border-radius:1px;background:#333"></div>
<div class="a" style="left:37.500px;top:419.500px;width:1.500px;height:1.500px;border-radius:1px;background:#333"></div>
<span class="cj" style="left:43px;top:374.43px;width:116.82px;height:7.38px"><svg width="116.82" height="7.38"><text x="0" y="5.41" font-size="6.15" fill="#222222">1.高职《遥感技术及应用》课程开展思政教</text></svg></span>
<span class="cj" style="left:43px;top:382.53px;width:31.75px;height:7.38px"><svg width="31.75" height="7.38"><text x="0" y="5.41" font-size="6.15" fill="#222222">育的必要性</text></svg></span>
<span class="cj" style="left:43px;top:391.23px;width:116.82px;height:7.38px"><svg width="116.82" height="7.38"><text x="0" y="5.41" font-size="6.15" fill="#222222">2.《遥感技术及应用》课程中思政元素的挖</text></svg></span>
<span class="cj" style="left:43px;top:399.23px;width:7.15px;height:7.38px"><svg width="7.15" height="7.38"><text x="0" y="5.41" font-size="6.15" fill="#222222">掘</text></svg></span>
<span class="cj" style="left:43px;top:407.53px;width:116.82px;height:7.38px"><svg width="116.82" height="7.38"><text x="0" y="5.41" font-size="6.15" fill="#222222">3.《遥感技术及应用》课程思政的实施路径</text></svg></span>
<span class="cj" style="left:43px;top:417.12px;width:36.87px;height:7.38px"><svg width="36.87" height="7.38"><text x="0" y="5.41" font-size="6.15" fill="#222222">4.问题与思考</text></svg></span>
<div class="a" style="left:90.500px;top:419.700px;width:39.500px;height:26.600px;background:#808080;"></div>
<svg class="ic" style="left:89px;top:389px" width="11" height="16" viewBox="0 0 11 16"><path d="M1 1v11.500l2.800-2.500 2 4.500 1.900-.9-2-4.300h3.800z" fill="#fff" stroke="#222" stroke-width=".9" stroke-linejoin="round"/></svg>
<!-- thumb 3 -->
<div class="a" style="left:26.500px;top:469.500px;width:145.500px;height:109.500px;box-sizing:border-box;border:1px solid #c6c6c6;border-radius:1.500px;background:#fff;box-shadow:0 0 2px rgba(0,0,0,.18);"></div>
<div class="lat" style="left:16px;top:476px;font-size:10px;font-weight:bold;color:#333;">3</div>
<span class="cj" style="left:46.24px;top:476.65px;width:107.51px;height:9.24px"><svg width="107.51" height="9.24"><text x="0" y="6.78" font-size="7.7" fill="#222222">1.高职《遥感技术及应用》课程</text></svg></span>
<span class="cj" style="left:61px;top:485.75px;width:78px;height:9.24px"><svg width="78" height="9.24"><text x="0" y="6.78" font-size="7.7" fill="#222222">开展思政教育的必要性</text></svg></span>
<div class="a" style="left:38px;top:499.4px;width:1px;height:1px;background:#333"></div>
<div class="a" style="left:38px;top:526.0px;width:1px;height:1px;background:#333"></div>
<span class="cj" style="left:43px;top:497.9px;width:117px;height:4.8px"><svg width="117" height="4.8"><text x="0" y="3.52" font-size="4" fill="#222222">版排置版智轮专员智节示员放版作开画形入，当版示工件图，计插</text></svg></span>
<span class="cj" style="left:43px;top:502.9px;width:117px;height:4.8px"><svg width="117" height="4.8"><text x="0" y="3.52" font-size="4" fill="#222222">节式当建，列享未剪，分贴件新，图索，件计置，会排，版智专视</text></svg></span>
<span class="cj" style="left:43px;top:508px;width:117px;height:4.8px"><svg width="117" height="4.8"><text x="0" y="3.52" font-size="4" fill="#222222">填图刷员发分令示，专工状，刷对，动建设映映插智模搜当模建廓</text></svg></span>
<span class="cj" style="left:43px;top:513px;width:117px;height:4.8px"><svg width="117" height="4.8"><text x="0" y="3.52" font-size="4" fill="#222222">复分插开廓换对切分享图换换版框格，，剪复动节换建始本填件式</text></svg></span>
<span class="cj" style="left:43px;top:518.1px;width:53px;height:4.8px"><svg width="53" height="4.8"><text x="0" y="3.52" font-size="4" fill="#222222">剪片本搜粘页模享灯享找刷命</text></svg></span>
<span class="cj" style="left:43px;top:524.5px;width:117px;height:4.8px"><svg width="117" height="4.8"><text x="0" y="3.52" font-size="4" fill="#222222">新式能本，版粘换插同演，同填复分列开图页重专始未搜开设审版</text></svg></span>
<span class="cj" style="left:43px;top:529.5px;width:117px;height:4.8px"><svg width="117" height="4.8"><text x="0" y="3.52" font-size="4" fill="#222222">状列转，置粘查放阅找索刷画分形粘板开切转动插片剪状建同齐始</text></svg></span>
<span class="cj" style="left:43px;top:534.6px;width:85px;height:4.8px"><svg width="85" height="4.8"><text x="0" y="3.52" font-size="4" fill="#222222">作开框图，填本享新形审转文演式始形入能页框</text></svg></span>
<span class="cj" style="left:127px;top:534.6px;width:33px;height:4.8px"><svg width="33" height="4.8"><text x="0" y="3.52" font-size="4" fill="#e02020">开插专发令件步粘</text></svg></span>
<span class="cj" style="left:43px;top:539.6px;width:117px;height:4.8px"><svg width="117" height="4.8"><text x="0" y="3.52" font-size="4" fill="#e02020">图灯开式新图示工形查形找图找框示轮图令切员享演，专找专放图</text></svg></span>
<span class="cj" style="left:43px;top:544.7px;width:45px;height:4.8px"><svg width="45" height="4.8"><text x="0" y="3.52" font-size="4" fill="#e02020">审查会工步放，计图置换</text></svg></span>
<span class="cj" style="left:87px;top:544.7px;width:73px;height:4.8px"><svg width="73" height="4.8"><text x="0" y="3.52" font-size="4" fill="#222222">格页专演具放智件粘动页列廓专转充剪板</text></svg></span>
<span class="cj" style="left:43px;top:549.8px;width:57px;height:4.8px"><svg width="57" height="4.8"><text x="0" y="3.52" font-size="4" fill="#222222">设令未作，找页列员，换刷智本</text></svg></span>
<span class="cj" style="left:99px;top:549.8px;width:61px;height:4.8px"><svg width="61" height="4.8"><text x="0" y="3.52" font-size="4" fill="#e02020">剪状框智建能列放片换状廓入刷工</text></svg></span>
<span class="cj" style="left:43px;top:554.8px;width:13px;height:4.8px"><svg width="13" height="4.8"><text x="0" y="3.52" font-size="4" fill="#e02020">协始件</text></svg></span>
<span class="cj" style="left:55px;top:554.8px;width:105px;height:4.8px"><svg width="105" height="4.8"><text x="0" y="3.52" font-size="4" fill="#222222">新刷设享当设充享换命幻对模索入能放置开索演审设建重阅</text></svg></span>
<span class="cj" style="left:43px;top:559.9px;width:21px;height:4.8px"><svg width="21" height="4.8"><text x="0" y="3.52" font-size="4" fill="#222222">搜专索转享</text></svg></span>
<!-- thumb 4 (cut) -->
<div class="a" style="left:0;top:588px;width:186px;height:16px;overflow:hidden">
  <div class="a" style="left:26.500px;top:4px;width:145.500px;height:40px;box-sizing:border-box;border:1px solid #c6c6c6;border-radius:1.500px;background:#fff;box-shadow:0 0 2px rgba(0,0,0,.18);"></div>
  <div class="lat" style="left:16px;top:11.500px;font-size:10px;font-weight:bold;color:#333;">4</div>
  <span class="cj" style="left:50.09px;top:9.35px;width:99.81px;height:9.24px"><svg width="99.81" height="9.24"><text x="0" y="6.78" font-size="7.7" fill="#222222">2.《遥感技术及应用》课程中</text></svg></span>
</div>
<div class="a" style="left:0;top:604px;width:186px;height:27.500px;background:#ebebeb"></div>
<svg class="ic" style="left:86.500px;top:611px" width="11" height="11" viewBox="0 0 11 11"><path d="M5.500 0v11M0 5.500h11" stroke="#444" stroke-width="1.100" fill="none"/></svg>

<!-- editor area -->
<div class="a" style="left:352px;top:206.500px;width:510.500px;height:382px;background:#fff;box-shadow:0 0 2.500px 2.800px rgba(0,0,0,.19);"></div>
<span class="cj" style="left:478.85px;top:333.85px;width:259.3px;height:34.44px"><svg width="259.3" height="34.44"><text class="sf" x="0" y="25.26" font-size="28.7" fill="#161616">《遥感技术及应用》</text></svg></span>
<span class="cj" style="left:483.2px;top:367.5px;width:249px;height:37.2px"><svg width="249" height="37.2"><text class="sf" x="0" y="27.28" font-size="31" fill="#161616">课程思政教学探索</text></svg></span>
<span class="cj" style="left:573.6px;top:428.2px;width:68.8px;height:27.12px"><svg width="68.8" height="27.12"><text class="sf" x="0" y="19.89" font-size="22.6" fill="#262626">黄铁兰</text></svg></span>
<div class="lat" style="left:352px;width:510.500px;text-align:center;top:460.800px;font-size:22.600px;color:#111;">2021-8-16</div>
<!-- vertical scrollbar -->
<div class="a" style="left:1029px;top:189px;width:12px;height:418px;background:#e0e0e0"></div>
<svg class="ic" style="left:1032px;top:199px" width="6" height="4" viewBox="0 0 6 4"><path d="M0 3.500h6L3 .3z" fill="#666"/></svg>
<div class="a" style="left:1029.500px;top:208.500px;width:10px;height:35px;box-sizing:border-box;border:1px solid #b9b9b9;border-radius:5px;background:#f8f8f8"></div>
<svg class="ic" style="left:1031.500px;top:554px" width="7" height="36" viewBox="0 0 7 36"><g fill="#666"><path d="M.5 2.500h6L3.500 6z"/><path d="M.8 16.500h5.400L3.500 13.700zM.8 20.200h5.400L3.500 17.400z"/><path d="M.8 28.500h5.400L3.500 31.300zM.8 32.200h5.400L3.500 35z"/></g></svg>
<!-- right sidebar -->
<div class="a" style="left:1041px;top:189px;width:34px;height:442.500px;background:#ebebeb"></div>
<div class="a" style="left:1041px;top:597px;width:34px;height:1px;background:#e0e0e0"></div>
<svg class="ic" style="left:1051px;top:196px" width="14" height="120" viewBox="0 0 14 120"><g fill="none" stroke="#555" stroke-width="1">
  <path d="M1 2.500h12M1 4.800h12" stroke="#cfcfcf"/>
  <circle cx="2.800" cy="24.500" r="1.500"/><path d="M4.300 24.500H13M1 31h7.500M11.500 31H13"/><circle cx="10" cy="31" r="1.500"/>
  <path d="M8 50l1.600 3.600 3.900.4-2.900 2.700.8 3.900L8 58.600l-3.400 2 .8-3.900L2.500 54l3.900-.4z" stroke-linejoin="round"/><path d="M2.600 58.500l-1.800 1.800M4 60.800l-1.800 1.800M6.500 61.500l-1.300 1.300" stroke-width=".9"/>
  <path d="M.8 86V75H10M3 84V77.400h10.700v12.600H10.500M1.500 88.700h6M5.800 87l1.700 1.700-1.700 1.700"/>
  <circle cx="7.500" cy="113" r="5.800"/><path d="M5.700 111.500a1.900 1.900 0 1 1 2.600 1.800c-.6.300-.8.700-.8 1.400M7.500 116.200v.9"/>
</g></svg>
<!-- notes -->
<div class="a" style="left:187px;top:606.500px;width:854px;height:25px;background:#ebebeb;border-top:1px solid #dcdcdc;box-sizing:border-box"></div>
<svg class="ic" style="left:192.500px;top:613.500px" width="13" height="10" viewBox="0 0 13 10"><path d="M.5 1h12M.5 4.500h8M.5 8h6M10.500 5.500v4M8.800 8l1.700 1.700L12.200 8" fill="none" stroke="#666" stroke-width="1"/></svg>
<span class="cj" style="left:211.8px;top:613.45px;width:83.4px;height:12.36px"><svg width="83.4" height="12.36"><text x="0" y="9.06" font-size="10.3" fill="#5e5e5e">单击此处添加备注</text></svg></span>
<svg class="ic" style="left:1051.500px;top:614.500px" width="13" height="4" viewBox="0 0 13 4"><g fill="none" stroke="#5a5a5a" stroke-width="1.100"><circle cx="2" cy="2" r="1.250"/><circle cx="6.300" cy="2" r="1.250"/><circle cx="10.600" cy="2" r="1.250"/></g></svg>

<!-- status bar -->
<span class="cj" style="left:8.6px;top:640.85px;width:28.9px;height:11.16px"><svg width="28.9" height="11.16"><text x="0" y="8.18" font-size="9.3" fill="#707070">幻灯片</text></svg></span><div class="lat" style="left:39.600px;top:640.700px;font-size:10px;color:#707070;word-spacing:.6px">1 / 15</div>
<div class="sep" style="left:75px;top:637px;height:17px;background:#ececec"></div>
<span class="cj" style="left:83.7px;top:640.85px;width:56.8px;height:11.16px"><svg width="56.8" height="11.16"><text x="0" y="8.18" font-size="9.3" fill="#707070">默认设计模板</text></svg></span>
<div class="sep" style="left:149px;top:637px;height:17px;background:#ececec"></div>
<svg class="ic" style="left:547px;top:639px" width="12" height="13" viewBox="0 0 12 13"><path d="M6 1l5 2.700v5.600L6 12 1 9.300V3.700zM1.500 4L6 6.500 10.500 4M6 6.500V9" fill="none" stroke="#555" stroke-width="1" stroke-linejoin="round"/></svg>
<span class="cj" style="left:563px;top:640.75px;width:39px;height:11.4px"><svg width="39" height="11.4"><text x="0" y="8.36" font-size="9.5" fill="#555555">智能美化</text></svg></span>
<svg class="ic" style="left:608px;top:644px" width="5" height="4" viewBox="0 0 5 4"><path d="M0 3.500h5L2.500 .5z" fill="#555"/></svg>
<div class="sep" style="left:622px;top:637px;height:17px;background:#ececec"></div>
<svg class="ic" style="left:632px;top:639.500px" width="14" height="11" viewBox="0 0 14 11"><path d="M.5 3h7M.5 6.500h13M.5 10h13M9.500 .8l1.800 2 1.800-2" fill="none" stroke="#444" stroke-width="1"/></svg>
<span class="cj" style="left:647px;top:640.75px;width:20px;height:11.4px"><svg width="20" height="11.4"><text x="0" y="8.36" font-size="9.5" fill="#444444">备注</text></svg></span>
<svg class="ic" style="left:669px;top:644px" width="5" height="4" viewBox="0 0 5 4"><path d="M0 .5h5L2.500 3.500z" fill="#777"/></svg>
<svg class="ic" style="left:680px;top:638px" width="15" height="14" viewBox="0 0 15 14"><path d="M4.500 2.500h8.700v7.500c0 1.400-.8 2.500-2.500 2.500H2.500V6" fill="none" stroke="#444" stroke-width="1"/><path d="M5.500 6h5.500M5.500 8.800h5.500" stroke="#666" stroke-width=".9"/><path d="M2.300 .3v4.400M.3 1.400l4 2.200M.3 3.600l4-2.200" stroke="#e0703c" stroke-width=".9"/></svg>
<span class="cj" style="left:696.5px;top:640.75px;width:20px;height:11.4px"><svg width="20" height="11.4"><text x="0" y="8.36" font-size="9.5" fill="#444444">批注</text></svg></span>
<div class="sep" style="left:727px;top:637px;height:17px;background:#ececec"></div>
<div class="a" style="left:734.500px;top:636px;width:18px;height:18.500px;border-radius:2px;background:#c8c8c8"></div>
<svg class="ic" style="left:737.500px;top:639.500px" width="12" height="11" viewBox="0 0 12 11"><path d="M.8.800h10.400v9.400H.8zM4 .8v9.400M.8 3.300H4" fill="none" stroke="#444" stroke-width="1.200"/></svg>
<svg class="ic" style="left:758.500px;top:639.500px" width="12" height="12" viewBox="0 0 12 12"><path d="M.7.700h4v4h-4zM7.300.7h4v4h-4zM.7 7.300h4v4h-4zM7.300 7.300h4v4h-4z" fill="none" stroke="#444" stroke-width="1"/></svg>
<svg class="ic" style="left:778px;top:639.500px" width="13" height="12" viewBox="0 0 13 12"><path d="M.7 1h4.300c1 0 1.500.5 1.500 1.500 0-1 .5-1.500 1.500-1.500h4.300v8.500H8c-1 0-1.500.7-1.500 1.500 0-.8-.5-1.500-1.500-1.500H.7zM6.500 2.500v8.500" fill="none" stroke="#444" stroke-width="1"/></svg>
<div class="sep" style="left:802px;top:637px;height:17px;background:#ececec"></div>
<div class="a" style="left:811px;top:636px;width:24px;height:18.500px;border-radius:3px;background:#f36c45"></div>
<svg class="ic" style="left:819px;top:640.300px" width="9" height="10" viewBox="0 0 9 10"><path d="M.5.300v9.400L8.500 5z" fill="#fff"/></svg>
<svg class="ic" style="left:839px;top:644px" width="5" height="4" viewBox="0 0 5 4"><path d="M0 .5h5L2.500 3.500z" fill="#777"/></svg>
<div class="sep" style="left:853px;top:637px;height:17px;background:#ececec"></div>
<svg class="ic" style="left:864px;top:639.500px" width="12" height="12" viewBox="0 0 12 12"><path d="M.6 3.500V1.600a1 1 0 0 1 1-1h1.900M8.500.6h1.900a1 1 0 0 1 1 1v1.900M11.400 8.500v1.900a1 1 0 0 1-1 1H8.500M3.500 11.400H1.600a1 1 0 0 1-1-1V8.500" fill="none" stroke="#555" stroke-width="1.100"/><rect x="3.500" y="3.500" width="5" height="5" fill="none" stroke="#555" stroke-width="1.100"/></svg>
<div class="lat" style="left:881.500px;top:640.500px;font-size:10px;color:#777;">67%</div>
<svg class="ic" style="left:905.500px;top:644px" width="5" height="4" viewBox="0 0 5 4"><path d="M0 .5h5L2.500 3.500z" fill="#999"/></svg>
<div class="a" style="left:919px;top:644.300px;width:8px;height:2px;background:#33333f"></div>
<div class="a" style="left:936px;top:645px;width:35px;height:1px;background:#777"></div>
<div class="a" style="left:971px;top:645px;width:74px;height:1px;background:#d0d0d0"></div>
<div class="a" style="left:990px;top:642.500px;width:1px;height:6px;background:#d0d0d0"></div>
<div class="a" style="left:966px;top:640.500px;width:9.500px;height:9.500px;box-sizing:border-box;border:1.200px solid #666;border-radius:50%;background:#fdfdfd"></div>
<svg class="ic" style="left:1054px;top:641.500px" width="8" height="8" viewBox="0 0 8 8"><path d="M4 0v8M0 4h8" stroke="#222" stroke-width="1.500" fill="none"/></svg>

<!-- bottom-left sharing label -->
<div class="a" style="left:0;top:690px;width:192px;height:24px;background:#0f1011"></div>
<div class="a" style="left:1.500px;top:690px;width:23.200px;height:24px;background:#f5831f"></div>
<svg class="ic" style="left:4.500px;top:694px" width="17" height="17" viewBox="0 0 17 17"><circle cx="8.500" cy="4.800" r="3.300" fill="#fff"/><path d="M1.500 15.500c.4-2.600 1.800-4.700 4.200-5.700l2.800 2.400 2.800-2.400c2.400 1 3.800 3.100 4.200 5.700z" fill="#fff"/></svg>
<svg class="ic" style="left:27.500px;top:694.500px" width="14" height="15" viewBox="0 0 14 15"><rect x="0" y="0" width="14" height="10.500" rx="1.200" fill="#fff"/><path d="M4 14.200h6" stroke="#fff" stroke-width="1.600"/><path d="M3.300 8c.5-2.300 2-3.500 4.200-3.600V2.600L11 5.500 7.500 8.300V6.500c-1.700 0-3 .4-4.200 1.500z" fill="#0f1011"/></svg>
<svg class="ic" style="left:44.500px;top:693px" width="14" height="18" viewBox="0 0 14 18"><rect x="3.600" y="2.500" width="6.800" height="10" rx="3.400" fill="#58e058"/><path d="M1.200 9a5.800 5.800 0 0 0 11.600 0M7 15v2.400" fill="none" stroke="#fff" stroke-width="1.700"/></svg>
<span class="cj" style="left:60.8px;top:694.25px;width:128.2px;height:19.08px"><svg width="128.2" height="19.08"><text x="0" y="13.99" font-size="15.9" fill="#ffffff">黄铁兰的屏幕共享</text></svg></span>

<!-- participant tiles -->
<div class="tile" style="top:54.500px;background:#1fa863;height:99.500px;left:1083px;width:178px"></div>
<div class="tile" style="top:162px;"></div>
<div class="tile" style="top:270px;"></div>
<div class="tile" style="top:377px;"></div>
<div class="tile" style="top:484px;"></div>
<div class="tile" style="top:590.500px;"></div>
<!-- tile 1 label -->
<div class="lab" style="left:1086px;top:130px;width:151px;height:21.500px"></div>
<div class="a" style="left:1086px;top:130px;width:20.500px;height:21.500px;background:#f5831f"></div>
<svg class="ic" style="left:1089px;top:133.500px" width="15" height="15" viewBox="0 0 17 17"><circle cx="8.500" cy="4.800" r="3.300" fill="#fff"/><path d="M1.500 15.500c.4-2.600 1.800-4.700 4.200-5.700l2.800 2.400 2.800-2.400c2.400 1 3.800 3.100 4.200 5.700z" fill="#fff"/></svg>
<svg class="ic" style="left:1109px;top:134.500px" width="14" height="14" viewBox="0 0 14 15"><rect x="0" y="0" width="14" height="10.500" rx="1.200" fill="#fff"/><path d="M4 14.200h6" stroke="#fff" stroke-width="1.600"/><path d="M3.300 8c.5-2.300 2-3.500 4.200-3.600V2.600L11 5.500 7.500 8.300V6.500c-1.700 0-3 .4-4.200 1.500z" fill="#111213"/></svg>
<svg class="ic" style="left:1129.500px;top:133px" width="14" height="17" viewBox="0 0 14 18"><rect x="3.600" y="1.500" width="6.800" height="10.500" rx="3.400" fill="#5fdf5f"/><path d="M1.200 8.800a5.800 5.800 0 0 0 11.600 0M7 14.800v2.600" fill="none" stroke="#fff" stroke-width="1.600"/></svg>
<span class="cj" style="left:1148.5px;top:135.7px;width:85.8px;height:12.72px"><svg width="85.8" height="12.72"><text x="0" y="9.33" font-size="10.6" fill="#ffffff">黄铁兰的屏幕共享</text></svg></span>
<!-- other labels -->
<div class="lab" style="left:1085px;top:237px;width:60.500px;height:21.500px"></div>
<svg class="ic" style="left:1089.2px;top:239.3px" width="16" height="17" viewBox="0 0 16 17"><rect x="4.700" y=".8" width="6.600" height="9.600" rx="3.300" fill="#fff"/><path d="M2.600 7.600a5.400 5.400 0 0 0 10.800 0M8 13v2.600" fill="none" stroke="#fff" stroke-width="1.500"/><path d="M2.300 14.800L13.700 2.200" stroke="#111213" stroke-width="2.600"/><path d="M2.300 14.800L13.700 2.200" stroke="#f0443a" stroke-width="1.200"/></svg>
<span class="cj" style="left:1109.5px;top:242.8px;width:33.4px;height:12.96px"><svg width="33.4" height="12.96"><text x="0" y="9.5" font-size="10.8" fill="#ffffff">常德娥</text></svg></span>
<div class="lab" style="left:1085px;top:344.200px;width:40px;height:21.800px"></div>
<svg class="ic" style="left:1089.2px;top:346.8px" width="16" height="17" viewBox="0 0 16 17"><rect x="4.700" y=".8" width="6.600" height="9.600" rx="3.300" fill="#fff"/><path d="M2.600 7.600a5.400 5.400 0 0 0 10.800 0M8 13v2.600" fill="none" stroke="#fff" stroke-width="1.500"/><path d="M2.300 14.800L13.700 2.200" stroke="#111213" stroke-width="2.600"/><path d="M2.300 14.800L13.700 2.200" stroke="#f0443a" stroke-width="1.200"/></svg>
<span class="cj" style="left:1109.5px;top:350.3px;width:11.8px;height:12.96px"><svg width="11.8" height="12.96"><text x="0" y="9.5" font-size="10.8" fill="#ffffff">喻</text></svg></span>
<div class="lab" style="left:1085px;top:451.500px;width:60.500px;height:21.500px"></div>
<svg class="ic" style="left:1089.2px;top:453.8px" width="16" height="17" viewBox="0 0 16 17"><rect x="4.700" y=".8" width="6.600" height="9.600" rx="3.300" fill="#fff"/><path d="M2.600 7.600a5.400 5.400 0 0 0 10.800 0M8 13v2.600" fill="none" stroke="#fff" stroke-width="1.500"/><path d="M2.300 14.800L13.700 2.200" stroke="#111213" stroke-width="2.600"/><path d="M2.300 14.800L13.700 2.200" stroke="#f0443a" stroke-width="1.200"/></svg>
<span class="cj" style="left:1109.5px;top:457.3px;width:33.4px;height:12.96px"><svg width="33.4" height="12.96"><text x="0" y="9.5" font-size="10.8" fill="#ffffff">张雪蕾</text></svg></span>
<div class="lab" style="left:1085px;top:558.500px;width:50px;height:21.500px"></div>
<svg class="ic" style="left:1089.2px;top:560.8px" width="16" height="17" viewBox="0 0 16 17"><rect x="4.700" y=".8" width="6.600" height="9.600" rx="3.300" fill="#fff"/><path d="M2.600 7.600a5.400 5.400 0 0 0 10.800 0M8 13v2.600" fill="none" stroke="#fff" stroke-width="1.500"/><path d="M2.300 14.800L13.700 2.200" stroke="#111213" stroke-width="2.600"/><path d="M2.300 14.800L13.700 2.200" stroke="#f0443a" stroke-width="1.200"/></svg>
<span class="cj" style="left:1109.5px;top:564.3px;width:22.6px;height:12.96px"><svg width="22.6" height="12.96"><text x="0" y="9.5" font-size="10.8" fill="#ffffff">申晨</text></svg></span>
<div class="lab" style="left:1085px;top:665.500px;width:60.500px;height:21.500px"></div>
<svg class="ic" style="left:1089.2px;top:668.0px" width="16" height="17" viewBox="0 0 16 17"><rect x="4.700" y=".8" width="6.600" height="9.600" rx="3.300" fill="#fff"/><path d="M2.600 7.600a5.400 5.400 0 0 0 10.800 0M8 13v2.600" fill="none" stroke="#fff" stroke-width="1.500"/><path d="M2.300 14.800L13.700 2.200" stroke="#111213" stroke-width="2.600"/><path d="M2.300 14.800L13.700 2.200" stroke="#f0443a" stroke-width="1.200"/></svg>
<span class="cj" style="left:1109.5px;top:671.3px;width:33.4px;height:12.96px"><svg width="33.4" height="12.96"><text x="0" y="9.5" font-size="10.8" fill="#ffffff">张金兰</text></svg></span>
<!-- avatars -->
<svg class="ic" style="left:1147px;top:72px" width="50" height="50" viewBox="0 0 50 50">
  <defs><clipPath id="av"><circle cx="25" cy="25" r="24.700"/></clipPath>
  <linearGradient id="a1g" x1="0" y1="0" x2="0" y2="1"><stop offset="0" stop-color="#557c2b"/><stop offset="1" stop-color="#3f601d"/></linearGradient></defs>
  <g clip-path="url(#av)"><g filter="url(#bl)">
    <rect width="50" height="50" fill="#44563c"/>
    <rect x="0" y="0" width="50" height="20" fill="#869585"/>
    <ellipse cx="27" cy="9" rx="10" ry="5.500" fill="#d6dcd8"/><ellipse cx="12" cy="15" rx="6" ry="3.500" fill="#d9dedb"/><ellipse cx="40" cy="14" rx="5" ry="5" fill="#cdd4cf"/>
    <ellipse cx="10" cy="7" rx="10" ry="6" fill="#2f3f2a"/><ellipse cx="22" cy="4" rx="5" ry="3" fill="#55694f"/><ellipse cx="36" cy="5" rx="6" ry="3" fill="#6b7d66"/>
    <rect x="0" y="19" width="50" height="13" fill="#31492b"/>
    <ellipse cx="25" cy="19.500" rx="26" ry="3" fill="#5d7556" opacity=".8"/>
    <rect x="4" y="27" width="46" height="4.500" fill="#2a3a26"/>
    <rect x="6" y="29" width="30" height="2" fill="#5a3a36" opacity=".7"/>
    <rect x="0" y="31" width="50" height="1.300" fill="#8b9a82"/>
    <rect x="0" y="32.300" width="50" height="18" fill="url(#a1g)"/>
    <rect x="2" y="35.500" width="40" height="1.200" fill="#7d8a3e" opacity=".6"/>
    <path d="M1.500 8h2.700v27H1.500z" fill="#1b2417"/>
    <path d="M38.500 4h1.800l1.400 33.500 1.300 2h-4.200l.9-2z" fill="#2a2a22"/>
    <path d="M21.800 10h1v20h-1zM31 12h.8v18H31z" fill="#55604f" opacity=".8"/>
  </g></g>
</svg>
<svg class="ic" style="left:1147.500px;top:179.500px" width="50" height="50" viewBox="0 0 50 50">
  <defs>
    <linearGradient id="a2s" x1="0" y1="0" x2="0" y2="1"><stop offset="0" stop-color="#c4c0bb"/><stop offset=".55" stop-color="#e8d6c0"/><stop offset="1" stop-color="#f2c07a"/></linearGradient>
    <radialGradient id="a2r" cx=".52" cy=".52" r=".5"><stop offset=".68" stop-color="#6e574b"/><stop offset=".85" stop-color="#5a463c"/><stop offset="1" stop-color="#46362f"/></radialGradient>
    <clipPath id="a2o"><circle cx="26.200" cy="26.100" r="17.600"/></clipPath>
    <filter id="bl" x="-5%" y="-5%" width="110%" height="110%"><feGaussianBlur stdDeviation=".45"/></filter>
  </defs>
  <g clip-path="url(#av)"><g filter="url(#bl)">
    <rect width="50" height="50" fill="url(#a2r)"/>
    <path d="M-1 30c1 8 6 15 13 19H-1zM51 30c-1 8-6 15-13 19h13z" fill="#b79c8a"/>
    <path d="M0 22c0-6 1-10 3-14l-3-2zM50 24c0-6-1-11-3.500-15l3.500-2z" fill="#a89183" opacity=".8"/>
    <ellipse cx="25" cy="47.500" rx="13" ry="2.500" fill="#b09080"/>
    <g clip-path="url(#a2o)">
      <rect x="8" y="8" width="37" height="15" fill="url(#a2s)"/>
      <path d="M8 14h14v9H8z" fill="#f3b45c" opacity=".55"/>
      <path d="M8 22.500h37v12H8z" fill="#e3e5e8"/>
      <path d="M19 22.700h18v1.200H19z" fill="#8b8f96" opacity=".7"/>
      <path d="M28 17.200c3-1.200 7-1.400 9.500-.2l.5 1.500c-3-.8-7-.6-10 .2z" fill="#7b91aa"/>
      <path d="M29 22.700c1.500-2.500 5-4 8.500-3.800l1.500 3.800z" fill="#3b3d35"/>
      <path d="M5 36.500c6-1.200 32-1.200 40 0v9H5z" fill="#2a2120"/>
      <path d="M8.500 27c1-2 4.500-2.300 6-.5l3.500 5.500-8.500 2z" fill="#e9edf5"/>
      <path d="M9 33.500c4-1.800 10-1.500 15.500.8l-.5 4.200c-5.500.8-11-.3-15-2.500z" fill="#c39a84"/>
      <path d="M14.500 31c3-1.300 7-.9 8.700.6l-.7 2.400c-3-.7-5.500-.7-7.500 0z" fill="#dde2ee"/>
      <path d="M33.500 33.500c1.500-3.800 5.500-5.500 10-4.500l2 6.500-9.500 5.500c-2.700-1.600-3.500-4.500-2.500-7.500z" fill="#8db3df"/>
      <path d="M24 36c3-1.500 6.500-1.500 9.500 0l1 5c-3.500 1-7.500 1-10.500 0z" fill="#24232b"/>
      <path d="M26.500 32.500c1-2.300 3.200-3.400 5.500-2.800l-1 3.800-3.500 1z" fill="#a7c6e7"/>
      <path d="M31.500 28.500c1-1 2.500-1.200 3.300-.5l-.8 2.500-2.500.5z" fill="#2f2b2b"/>
    </g>
    <circle cx="11" cy="22.500" r="2.700" fill="#2b2422"/><path d="M8.600 23.500c-.5 2 .2 4 1.200 5l1.500-4z" fill="#2b2422"/>
    <circle cx="42" cy="25.500" r="2.900" fill="#2a2526"/>
    <circle cx="26.200" cy="26.100" r="17.800" fill="none" stroke="#3f302a" stroke-width="1" opacity=".8"/>
    <path d="M13 44.500l-1.300 4M25 46v3.500M38 44.500l1.300 4" stroke="#4a372e" stroke-width="1"/>
  </g></g>
</svg>
<svg class="ic" style="left:1147.500px;top:286.500px" width="50" height="50" viewBox="0 0 50 50">
  <g clip-path="url(#av)"><g filter="url(#bl)">
    <rect width="50" height="50" fill="#ede08c"/>
    <path d="M-2 22C4 14 14 10 22 12l10 10c6-1 14 0 20 4v26H-2z" fill="#3a332f"/>
    <path d="M30 20c6-2 14-1 22 3v12H36z" fill="#45403a"/>
    <path d="M38 18l14-4v10l-10-1z" fill="#d8c469" opacity=".8"/>
    <path d="M20 36c3-5 10-8 17-6 4 3 6 8 4 14-3 3-7 5-11 5-5-3-9-7-10-13z" fill="#f1f0ea"/>
    <path d="M4 40c2 5 8 9 14 10H8z" fill="#e9e7e0"/>
    <path d="M12 47c6 3 14 4 20 2v3H12z" fill="#e9c45c"/>
    <g transform="translate(-.5 -1.500)"><ellipse cx="24" cy="3.500" rx="2.600" ry="2.200" fill="#111"/><ellipse cx="35" cy="6" rx="2.300" ry="2" fill="#111"/>
    <ellipse cx="25.500" cy="15" rx="12.500" ry="11.500" fill="#f6f6f2"/>
    <ellipse cx="21" cy="12" rx="3.400" ry="2.800" fill="#151515" transform="rotate(-20 21 12)"/>
    <ellipse cx="31" cy="14.500" rx="3" ry="3.200" fill="#151515" transform="rotate(15 31 14.500)"/>
    <circle cx="21.500" cy="12" r="1.300" fill="#d8dde0"/><circle cx="30.800" cy="14.300" r="1.300" fill="#d8dde0"/>
    <ellipse cx="26" cy="17" rx="1.600" ry="1" fill="#222"/>
    <path d="M22 18.500c2 1 4 1.500 6 1-.5 2.500-2 4-4 3.800-1.500-.6-2.300-2.500-2-4.800z" fill="#d9657a"/></g>
    <path d="M46.500 13L33.500 45" stroke="#6f6757" stroke-width="1.300"/>
    <path d="M32 38c2-1 4 0 5 2l-1.500 6c-2 .5-4-.5-4.500-2.500z" fill="#4a443e"/>
  </g></g>
</svg>
<svg class="ic" style="left:1147.500px;top:393.700px" width="50" height="50" viewBox="0 0 50 50">
  <defs><linearGradient id="a4g" x1="0" y1="0" x2="1" y2="0"><stop offset="0" stop-color="#c47a16"/><stop offset=".35" stop-color="#cf8a1c"/><stop offset=".6" stop-color="#6e3707"/><stop offset="1" stop-color="#1a0a03"/></linearGradient></defs>
  <g clip-path="url(#av)"><g filter="url(#bl)">
    <rect width="50" height="50" fill="url(#a4g)"/>
    <path d="M22 0h14v18H22z" fill="#5a2503"/><path d="M27 4h10v12H27z" fill="#c47a17"/>
    <path d="M34 8l16-6v28H38z" fill="#2a1003"/>
    <path d="M28 16h8v20h-8z" fill="#b06a12"/><path d="M36 19h3v12h-3z" fill="#d8901c"/>
    <path d="M0 12l20-9v6L0 20zM0 26l22-10v4L0 31z" fill="#b86f12" opacity=".55"/>
    <path d="M8 22l12-5v3L8 25zM10 33l10-6v2.500L10 36z" fill="#6a3406" opacity=".8"/>
    <path d="M9 8h2v14H9zM14 6h2v14h-2zM4 16h2v12H4z" fill="#f0b43a" opacity=".6"/>
    <path d="M26 22c8 6 14 12 24 16v4c-10-2-18-9-26-17z" fill="#c98a3a" opacity=".7"/>
    <path d="M0 41h50v9H0z" fill="#a8650f"/><path d="M6 40l30 0 6 3H2z" fill="#4a2405"/>
    <circle cx="32" cy="19" r="1.300" fill="#ffd76a"/><circle cx="40" cy="28" r="1.400" fill="#ffd15a"/><circle cx="48" cy="20.500" r="1.100" fill="#ffca52"/><circle cx="40" cy="37" r="1" fill="#f7c050"/><circle cx="43" cy="32" r=".9" fill="#f0b040"/>
    <path d="M21.500 13.500c1-1.500 3.500-1.500 4 .3l-.3 3 1.500 6.500-1.200 9-.8 12.500 2.300 1.500-4.800.4.600-13-2.600-3.300 1.600-10z" fill="#160b04"/>
    <path d="M20 33c2-2 5-2 7 0l1.500 5h-10z" fill="#3b2408" opacity=".9"/>
    <rect width="50" height="50" fill="#2a1200" opacity=".16"/>
  </g></g>
</svg>
<svg class="ic" style="left:1147.500px;top:500.800px" width="50" height="50" viewBox="0 0 50 50">
  <g clip-path="url(#av)"><g filter="url(#bl)">
    <rect width="50" height="50" fill="#100c20"/>
    <g transform="skewY(7)">
      <path d="M18 -1h20v6.500H18z" fill="#f4f2f4"/><path d="M4 2h10v5H4z" fill="#ece9ee"/><path d="M14.200 1h1.800v7h-1.800z" fill="#c84a52"/>
      <path d="M18.500 9.500h28v8h-28z" fill="#f6f4f6"/><path d="M5 13h10.500v6H5z" fill="#e8d9b8"/>
      <path d="M27.500 9.500h1.300v8h-1.300z" fill="#f1d743"/><path d="M38.500 10.500h1.500v7h-1.500z" fill="#e85b5b"/><path d="M41 10h1.600v7.500H41z" fill="#4d8fd0"/><path d="M44.500 10h2v7.500h-2z" fill="#3f9fc8"/>
      <path d="M7 13.500h1v5.500H7zM9.500 13.500h1v5.500h-1zM12 13.500h1v5.500h-1z" fill="#c96fb0"/>
      <path d="M18.500 21.500h27.500v8h-27.500z" fill="#f7f4f2"/><path d="M24.500 21.500h1.500v8h-1.500z" fill="#6a4fb0"/><path d="M29.500 21.500h1.300v8h-1.300z" fill="#f0d040"/><path d="M43 22.500h3.500v7.500H43z" fill="#e03a3a"/><path d="M37 21.500h1v8h-1z" fill="#e890b0"/>
      <path d="M3.500 22h3v5h-3z" fill="#e6e3ee"/>
      <path d="M22 32.500h8v5.500h-8z" fill="#e9e6ea"/><path d="M30 33.500h3v6h-3z" fill="#2da57a"/><path d="M33.500 33.500h2v6.500h-2z" fill="#f2f2f2"/><path d="M24 38.500h3v2h-3z" fill="#e8503a"/>
      <path d="M36.500 34.500h8v6.500h-8z" fill="#efeef2"/><path d="M44 35.500h3v5h-3z" fill="#e8503a"/><path d="M33 34h1.200v6H33z" fill="#5a7fd0"/>
      <path d="M20 43.500h22v5H20z" fill="#8a5a70" opacity=".7"/>
    </g>
    <path d="M7 27c1-5 5-7.500 9-6.500 3 1.500 4 5 3 9.500l-1 6H8z" fill="#120e1c"/>
    <path d="M6.500 38c1-3.500 4.500-5.500 8-4.500l4 4.500 2 12H9z" fill="#d6a04e"/>
    <path d="M17.500 33.500l5-1.500 2 4.500-5 2z" fill="#f4f0f0"/>
    <path d="M18 38.500l4-1.500 1.500 11h-4z" fill="#c99a86"/>
  </g></g>
</svg>
<div class="a" style="left:1147.300px;top:608px;width:50px;height:50px;border-radius:50%;background:#0a6cff"></div>
<span class="cj" style="left:1154.3px;top:624.5px;width:37px;height:21.6px"><svg width="37" height="21.6"><text x="0" y="15.84" font-size="18" font-weight="500" fill="#ffffff">金兰</text></svg></span>


</body>
</html>
